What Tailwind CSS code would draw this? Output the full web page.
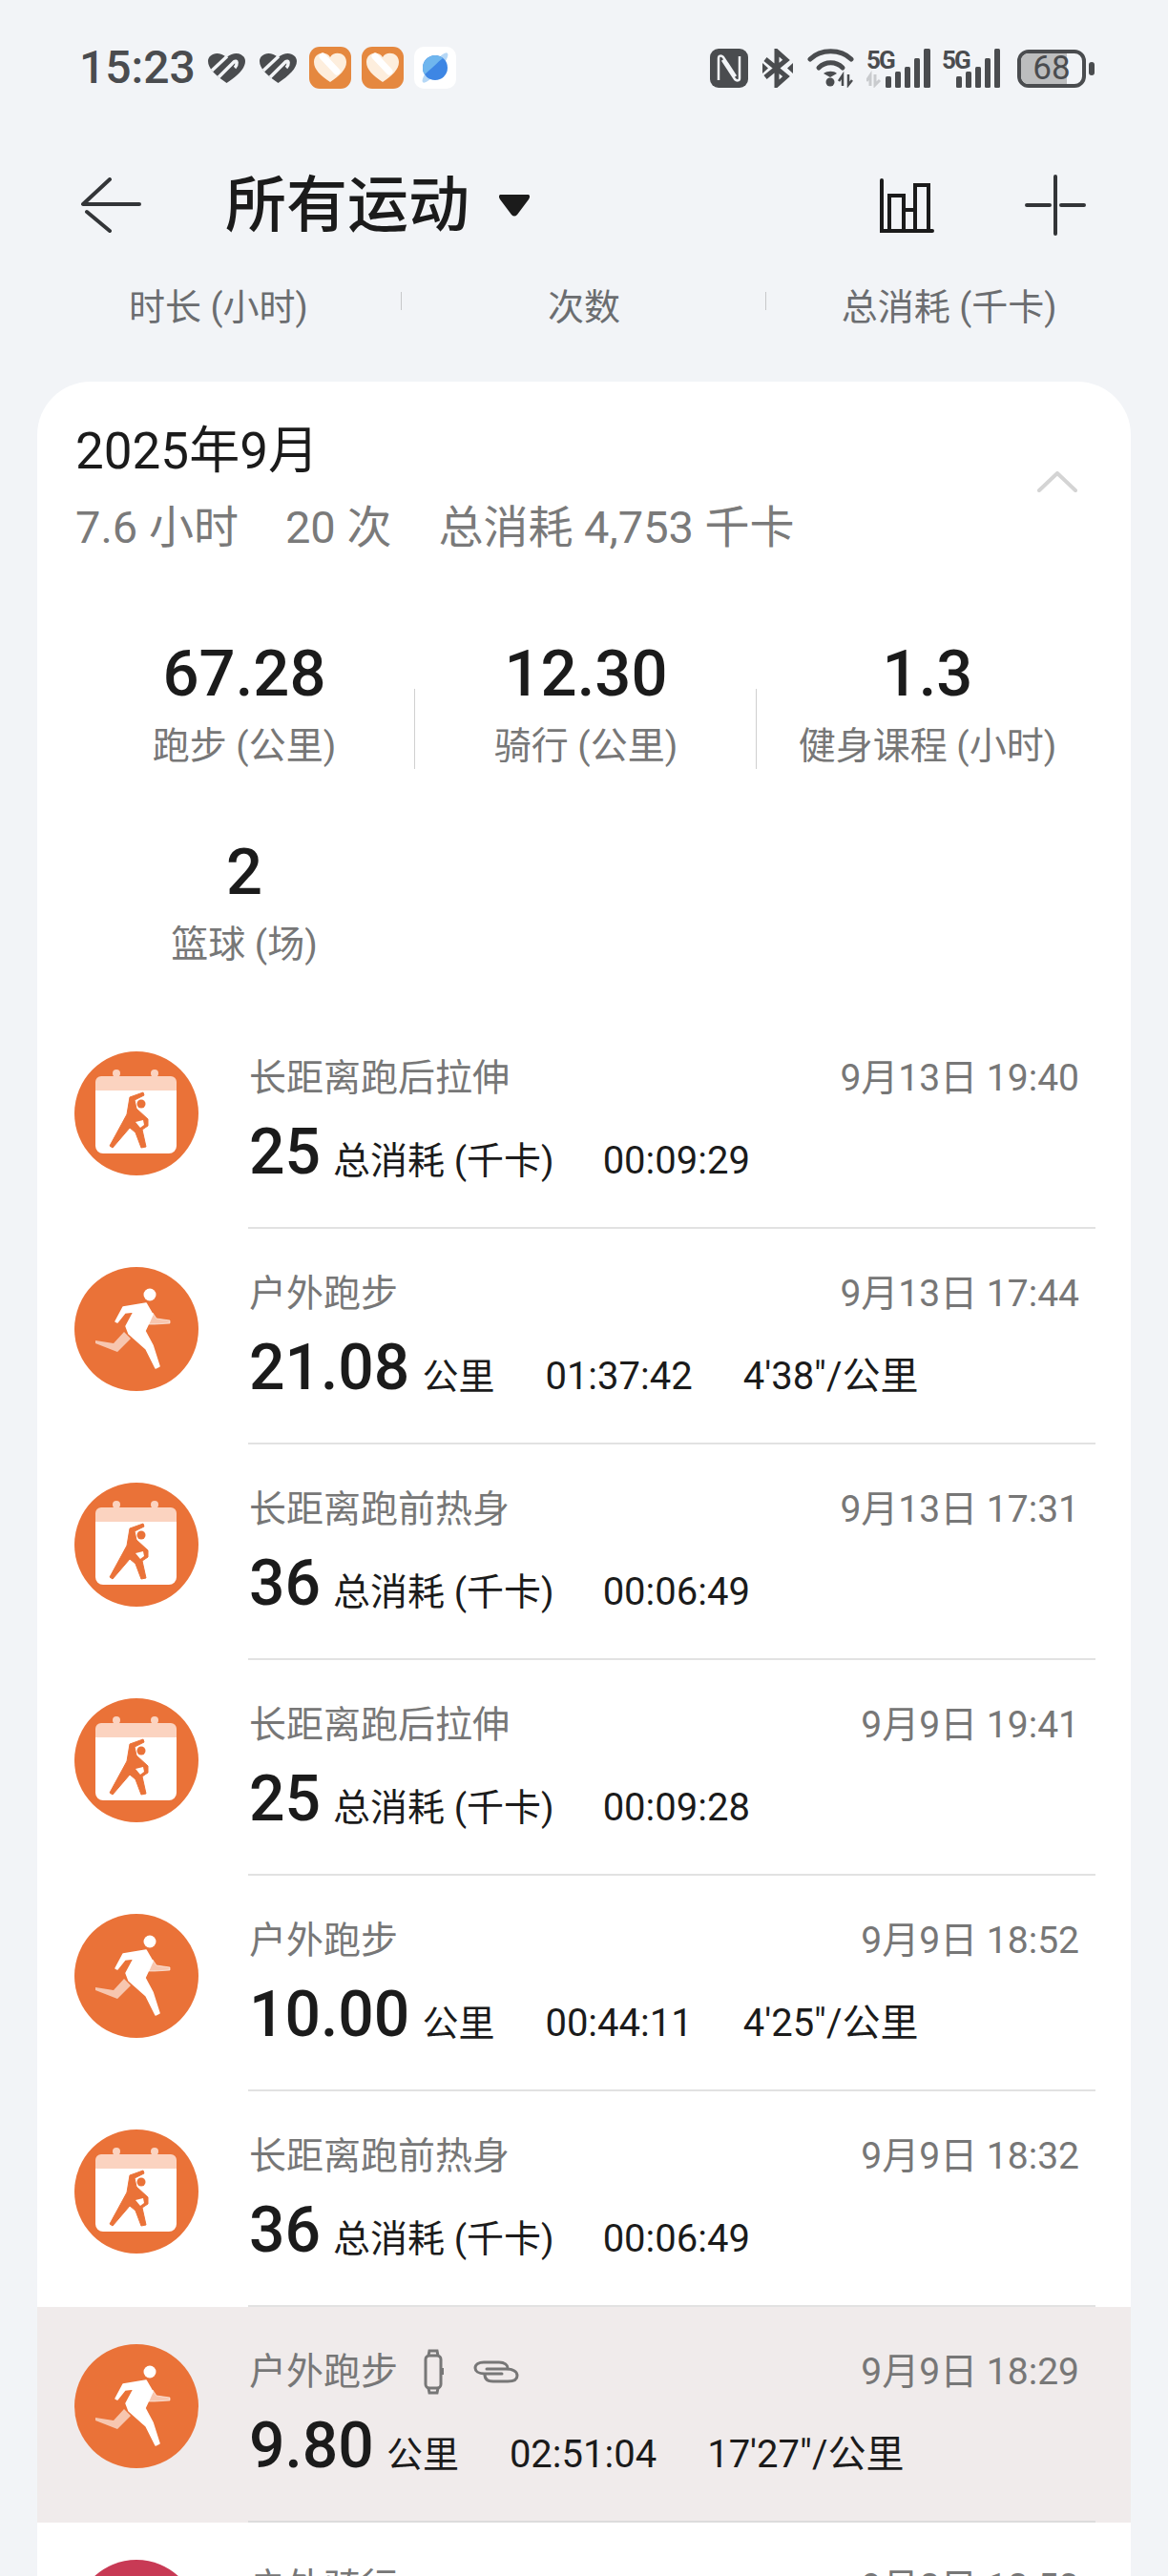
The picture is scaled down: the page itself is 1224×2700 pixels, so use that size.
<!DOCTYPE html>
<html lang="zh">
<head>
  <meta charset="UTF-8" />
  <title>所有运动</title>
  <script src="https://cdn.jsdelivr.net/npm/@tailwindcss/browser@4"></script>
</head>
<body class="bg-[#f2f4f7] h-[2700px] overflow-hidden font-['Roboto','Noto_Sans_CJK_SC',sans-serif]">

  <!-- hidden icon defs -->
  <svg class="hidden">
    <symbol id="run" viewBox="0 0 130 130">
      <circle cx="65" cy="65" r="65" fill="#ea7238"/>
      <path d="M82 48 86 54 100 56 100 59 84 60 78 60Z" fill="#fff" fill-opacity=".6" stroke="#fff" stroke-opacity=".6" stroke-width="1" stroke-linejoin="round"/>
      <path d="M22 77 41 80 52 68 59 75 45 89 22 80Z" fill="#fff" fill-opacity=".6" stroke-linejoin="round"/>
      <circle cx="79" cy="29" r="6.5" fill="#fff"/>
      <path d="M43 57 51 42 75 38 82 50 74 67 82 82 89 104 85 106 75 86 57 70 54 62 62 47 53 48 45 58Z" fill="#fff" stroke="#fff" stroke-width="1.5" stroke-linejoin="round"/>
    </symbol>
    <symbol id="stretch" viewBox="0 0 130 130">
      <circle cx="65" cy="65" r="65" fill="#ea7238"/>
      <circle cx="44" cy="23" r="4" fill="#fbd3c0"/>
      <circle cx="84" cy="23" r="4" fill="#fbd3c0"/>
      <path d="M22 41V32a6 6 0 0 1 6-6H101a6 6 0 0 1 6 6V41Z" fill="#fbd3c0"/>
      <path d="M22 41H107V99a8 8 0 0 1-8 8H30a8 8 0 0 1-8-8Z" fill="#fff"/>
      <circle cx="70" cy="55" r="4.5" fill="#ea7238"/>
      <path d="M58 48 72 43 73 46 63 51 65 60 77 71 77 78 71 82 75 100 70 101 64 85 58 80 40 101 37 99 55 66Z" fill="#ea7238" stroke="#ea7238" stroke-width="1" stroke-linejoin="round"/>
      <path d="M64 74 72 72 73 77 69 80Z" fill="#fff"/>
    </symbol>
    <symbol id="pulse" viewBox="0 0 39 32">
      <path d="M19.5 32C8 24 0 17 0 9 0 2 10-3 19.5 5 29-3 39 2 39 9 39 17 31 24 19.5 32Z" fill="#4a4c4f"/>
      <path d="M4 19 20 4M11 26 27 10C31 7 31 13 28 16" fill="none" stroke="#f2f4f7" stroke-width="3.5"/>
    </symbol>
    <symbol id="health" viewBox="0 0 44 44">
      <rect width="44" height="44" rx="11" fill="#e5883f"/>
      <path d="M22 37C12 30 5 24 5 16 5 6 18 4 22 11 26 4 39 6 39 16 39 24 32 30 22 37Z" fill="#fdeedd"/>
      <path d="M14 10 29 26" stroke="#fff" stroke-width="7" stroke-linecap="round"/>
    </symbol>
  </svg>

  <!-- status bar -->
  <div class="h-[165px] pt-[49px] pl-[83px] pr-[77px] flex justify-between items-start">
    <div class="flex items-center h-[44px] text-[#4a4c4f]">
      <span class="text-[48px] font-medium leading-none w-[135px]">15:23</span>
      <svg class="w-[39px] h-[32px]"><use href="#pulse"/></svg>
      <svg class="w-[39px] h-[32px] ml-[15px] mr-[13px]"><use href="#pulse"/></svg>
      <svg class="w-[44px] h-[44px]"><use href="#health"/></svg>
      <svg class="w-[44px] h-[44px] ml-[11px]"><use href="#health"/></svg>
      <svg class="w-[44px] h-[44px] ml-[11px]" viewBox="0 0 44 44"><rect width="44" height="44" rx="10" fill="#fff"/><ellipse cx="22" cy="22" rx="20" ry="5" transform="rotate(-50 22 22)" fill="#b6d8f6"/><circle cx="22" cy="22" r="13" fill="#3d86e4"/><path d="M9 21A13 13 0 0 1 30 12C26 15 16 25 11 29 9 27 9 24 9 21Z" fill="#6fb6ee"/></svg>
    </div>
    <div class="flex items-center h-[41px] mt-[2px] text-[#4a4c4f]">
      <svg class="w-[40px] h-[41px]" viewBox="0 0 40 41"><rect width="40" height="41" rx="9" fill="#4a4c4f"/><path d="M9 33V10C9 7 12 7 14 9L27 29M31 8V31C31 34 28 34 26 32L13 12" fill="none" stroke="#f2f4f7" stroke-width="2.5"/></svg>
      <svg class="w-[32px] h-[41px] ml-[15px]" viewBox="0 0 32 41"><path d="M3 11 25 29 15 38V3L25 12 3 30" fill="none" stroke="#4a4c4f" stroke-width="5"/><path d="M0 15V26L6 20.500ZM32 15V26L26 20.500Z" fill="#4a4c4f"/></svg>
      <svg class="w-[49px] h-[41px] ml-[15px]" viewBox="0 0 49 41"><g fill="none" stroke="#4a4c4f" stroke-width="5" stroke-linecap="round"><path d="M3 11C14 0 35 0 46 11"/><path d="M12 20C19 13 30 13 37 20"/></g><path d="M17 26C21 23 28 23 31 26L24 30Z" fill="#4a4c4f"/><circle cx="24" cy="35" r="4.500" fill="#4a4c4f"/><path d="M37 39V28L33 34M43 27V38L47 33" fill="none" stroke="#4a4c4f" stroke-width="2.500"/></svg>
      <div class="relative w-[67px] h-[41px] ml-[13px]">
        <span class="absolute left-0 -top-[1px] text-[26px] font-bold leading-none tracking-[-2px]">5G</span>
        <svg class="absolute left-0 top-0 w-[67px] h-[41px]" viewBox="0 0 67 41" fill="#4a4c4f"><path d="M4 39V28L0 34M9 27V38L14 33" fill="none" stroke="#c9cbce" stroke-width="3"/><rect x="20" y="29" width="6" height="12" rx="1.500"/><rect x="30" y="24" width="6" height="17" rx="1.500"/><rect x="40" y="19" width="6" height="22" rx="1.500"/><rect x="50" y="10" width="6" height="31" rx="1.500"/><rect x="60" y="0" width="7" height="41" rx="1.500"/></svg>
      </div>
      <div class="relative w-[61px] h-[41px] ml-[12px]">
        <span class="absolute left-0 -top-[1px] text-[26px] font-bold leading-none tracking-[-2px]">5G</span>
        <svg class="absolute left-0 top-0 w-[61px] h-[41px]" viewBox="0 0 61 41" fill="#4a4c4f"><rect x="15" y="29" width="6" height="12" rx="1.500"/><rect x="25" y="24" width="6" height="17" rx="1.500"/><rect x="35" y="19" width="6" height="22" rx="1.500"/><rect x="45" y="10" width="6" height="31" rx="1.500"/><rect x="55" y="0" width="6" height="41" rx="1.500"/></svg>
      </div>
      <div class="relative w-[72px] h-[40px] ml-[18px] rounded-[12px] border-[4px] border-[#4a4c4f] overflow-hidden">
        <div class="absolute inset-y-0 left-0 w-[75%] bg-[#bcbdbe]"></div>
        <span class="absolute inset-0 flex items-center justify-center text-[35px] leading-none">68</span>
      </div>
      <div class="w-[6px] h-[14px] ml-[3px] rounded-sm bg-[#4a4c4f]"></div>
    </div>
  </div>

  <!-- nav -->
  <div class="h-[100px] flex items-center pl-[85px] pr-[86px]">
    <svg class="w-[63px] h-[58px]" viewBox="0 0 63 58" fill="none" stroke="#333538" stroke-width="4" stroke-linecap="round" stroke-linejoin="round"><path d="M30 2 2 28H61M6 36 30 56"/></svg>
    <span class="ml-[88px] mt-[2px] text-[64px] leading-none font-medium text-[#1b1b1b]">所有运动</span>
    <svg class="ml-[31px] w-[32px] h-[23px]" viewBox="0 0 32 23" fill="#1b1b1b"><path d="M2 0H30C32 0 33 2 31 5L19 21C17 23 15 23 13 21L1 5C-1 2 0 0 2 0Z"/></svg>
    <svg class="ml-auto w-[57px] h-[57px]" viewBox="0 0 57 57" fill="none" stroke="#1b1b1b" stroke-width="4" stroke-linecap="round"><path d="M2 2V55H55"/><path d="M10 55V18H25V55M25 33H37V55M37 55V7H51V55"/></svg>
    <svg class="ml-[95px] w-[64px] h-[64px]" viewBox="0 0 64 64" fill="none" stroke="#333538" stroke-width="4" stroke-linecap="round"><path d="M32 2V62M2 32H26M38 32H62"/></svg>
  </div>

  <!-- column labels -->
  <div class="h-[44px] mt-[35px] grid grid-cols-3 text-[38px] leading-[44px] text-[#6b6d70] text-center px-[38px]">
    <div class="relative pr-[1px]">时长 (小时)<span class="absolute right-0 top-[6px] h-[19px] w-[1px] bg-[#c7c8ca]"></span></div>
    <div class="relative">次数<span class="absolute right-0 top-[6px] h-[19px] w-[1px] bg-[#c7c8ca]"></span></div>
    <div>总消耗 (千卡)</div>
  </div>

  <!-- month card -->
  <div class="mx-[39px] mt-[56px] w-[1146px] h-[2300px] rounded-t-[56px] bg-white overflow-hidden">
    <div class="relative pl-[40px] pt-[43px]">
      <div class="text-[53px] leading-[60px] text-[#1b1b1b]">2025年9月</div>
      <div class="mt-[22px] flex gap-[49px] text-[47px] leading-[56px] text-[#7a7a7a] whitespace-nowrap">
        <span>7.6 小时</span><span>20 次</span><span>总消耗 4,753 千卡</span>
      </div>
      <svg class="absolute left-[1048px] top-[94px] w-[42px] h-[22px]" viewBox="0 0 42 22" fill="none" stroke="#d4d4d4" stroke-width="4" stroke-linecap="round" stroke-linejoin="round"><path d="M2 20 21 2 40 20"/></svg>
    </div>

    <!-- totals -->
    <div class="mt-[85px] grid grid-cols-3 w-[1074px] ml-[38px] text-center">
      <div class="relative h-[208px]">
        <div class="text-[67px] leading-[80px] font-medium text-[#1b1b1b]">67.28</div>
        <div class="text-[39px] leading-[48px] text-[#777] mt-[12px]">跑步 (公里)</div>
        <span class="absolute right-0 top-[56px] h-[84px] w-[1px] bg-[#d0d0d0]"></span>
      </div>
      <div class="relative h-[208px]">
        <div class="text-[67px] leading-[80px] font-medium text-[#1b1b1b]">12.30</div>
        <div class="text-[39px] leading-[48px] text-[#777] mt-[12px]">骑行 (公里)</div>
        <span class="absolute right-0 top-[56px] h-[84px] w-[1px] bg-[#d0d0d0]"></span>
      </div>
      <div class="h-[208px]">
        <div class="text-[67px] leading-[80px] font-medium text-[#1b1b1b]">1.3</div>
        <div class="text-[39px] leading-[48px] text-[#777] mt-[12px] whitespace-nowrap">健身课程 (小时)</div>
      </div>
      <div class="h-[188px]">
        <div class="text-[67px] leading-[80px] font-medium text-[#1b1b1b]">2</div>
        <div class="text-[39px] leading-[48px] text-[#777] mt-[12px]">篮球 (场)</div>
      </div>
    </div>

    <!-- records -->
    <div>
      <div class="h-[226px] flex pl-[39px]">
        <svg class="mt-[40px] w-[130px] h-[130px] shrink-0"><use href="#stretch"/></svg>
        <div class="ml-[52px] w-[888px] border-b-2 border-[#e2e2e2] pl-[1px] pr-[17px]">
          <div class="flex justify-between mt-[43px] text-[39px] leading-[50px] text-[#777]"><span>长距离跑后拉伸</span><span>9月13日 19:40</span></div>
          <div class="flex items-baseline mt-[13px] text-[#1b1b1b] whitespace-pre"><span class="text-[66px] leading-[80px] font-medium mr-[13px]">25</span><span class="text-[39px] mr-[51px]">总消耗 (千卡)</span><span class="text-[40px]">00:09:29</span></div>
        </div>
      </div>
      <div class="h-[226px] flex pl-[39px]">
        <svg class="mt-[40px] w-[130px] h-[130px] shrink-0"><use href="#run"/></svg>
        <div class="ml-[52px] w-[888px] border-b-2 border-[#e2e2e2] pl-[1px] pr-[17px]">
          <div class="flex justify-between mt-[43px] text-[39px] leading-[50px] text-[#777]"><span>户外跑步</span><span>9月13日 17:44</span></div>
          <div class="flex items-baseline mt-[13px] text-[#1b1b1b] whitespace-pre"><span class="text-[66px] leading-[80px] font-medium mr-[13px]">21.08</span><span class="text-[38px] mr-[53px]">公里</span><span class="text-[40px] mr-[53px]">01:37:42</span><span class="text-[40px]">4'38"/公里</span></div>
        </div>
      </div>
      <div class="h-[226px] flex pl-[39px]">
        <svg class="mt-[40px] w-[130px] h-[130px] shrink-0"><use href="#stretch"/></svg>
        <div class="ml-[52px] w-[888px] border-b-2 border-[#e2e2e2] pl-[1px] pr-[17px]">
          <div class="flex justify-between mt-[43px] text-[39px] leading-[50px] text-[#777]"><span>长距离跑前热身</span><span>9月13日 17:31</span></div>
          <div class="flex items-baseline mt-[13px] text-[#1b1b1b] whitespace-pre"><span class="text-[66px] leading-[80px] font-medium mr-[13px]">36</span><span class="text-[39px] mr-[51px]">总消耗 (千卡)</span><span class="text-[40px]">00:06:49</span></div>
        </div>
      </div>
      <div class="h-[226px] flex pl-[39px]">
        <svg class="mt-[40px] w-[130px] h-[130px] shrink-0"><use href="#stretch"/></svg>
        <div class="ml-[52px] w-[888px] border-b-2 border-[#e2e2e2] pl-[1px] pr-[17px]">
          <div class="flex justify-between mt-[43px] text-[39px] leading-[50px] text-[#777]"><span>长距离跑后拉伸</span><span>9月9日 19:41</span></div>
          <div class="flex items-baseline mt-[13px] text-[#1b1b1b] whitespace-pre"><span class="text-[66px] leading-[80px] font-medium mr-[13px]">25</span><span class="text-[39px] mr-[51px]">总消耗 (千卡)</span><span class="text-[40px]">00:09:28</span></div>
        </div>
      </div>
      <div class="h-[226px] flex pl-[39px]">
        <svg class="mt-[40px] w-[130px] h-[130px] shrink-0"><use href="#run"/></svg>
        <div class="ml-[52px] w-[888px] border-b-2 border-[#e2e2e2] pl-[1px] pr-[17px]">
          <div class="flex justify-between mt-[43px] text-[39px] leading-[50px] text-[#777]"><span>户外跑步</span><span>9月9日 18:52</span></div>
          <div class="flex items-baseline mt-[13px] text-[#1b1b1b] whitespace-pre"><span class="text-[66px] leading-[80px] font-medium mr-[13px]">10.00</span><span class="text-[38px] mr-[53px]">公里</span><span class="text-[40px] mr-[53px]">00:44:11</span><span class="text-[40px]">4'25"/公里</span></div>
        </div>
      </div>
      <div class="h-[226px] flex pl-[39px]">
        <svg class="mt-[40px] w-[130px] h-[130px] shrink-0"><use href="#stretch"/></svg>
        <div class="ml-[52px] w-[888px] border-b-2 border-[#e2e2e2] pl-[1px] pr-[17px]">
          <div class="flex justify-between mt-[43px] text-[39px] leading-[50px] text-[#777]"><span>长距离跑前热身</span><span>9月9日 18:32</span></div>
          <div class="flex items-baseline mt-[13px] text-[#1b1b1b] whitespace-pre"><span class="text-[66px] leading-[80px] font-medium mr-[13px]">36</span><span class="text-[39px] mr-[51px]">总消耗 (千卡)</span><span class="text-[40px]">00:06:49</span></div>
        </div>
      </div>
      <!-- pressed row -->
      <div class="h-[226px] flex pl-[39px] bg-[#f0ebeb]">
        <svg class="mt-[39px] w-[130px] h-[130px] shrink-0"><use href="#run"/></svg>
        <div class="ml-[52px] w-[888px] border-b-2 border-[#dcdcdc] pl-[1px] pr-[17px]">
          <div class="flex justify-between items-center mt-[43px] text-[39px] leading-[50px] text-[#777]">
            <span class="flex items-center">户外跑步
              <svg class="ml-[27px] w-[21px] h-[48px]" viewBox="0 0 21 48" fill="none" stroke="#777" stroke-width="3"><rect x="2" y="7" width="16" height="34" rx="4"/><path d="M5 7 6 2H14L15 7M5 41 6 46H14L15 41M20 20V27"/></svg>
              <svg class="ml-[31px] w-[48px] h-[24px]" viewBox="0 0 48 24" fill="none" stroke="#777" stroke-width="3" stroke-linecap="round"><path d="M30 14H12C5 14 2 11 2 8 2 4 6 2 11 2H27C33 2 36 5 36 8"/><path d="M14 9H34C42 9 46 12 46 16 46 20 42 22 36 22H21C15 22 12 20 12 15"/></svg>
            </span>
            <span>9月9日 18:29</span>
          </div>
          <div class="flex items-baseline mt-[13px] text-[#1b1b1b] whitespace-pre"><span class="text-[66px] leading-[80px] font-medium mr-[13px]">9.80</span><span class="text-[38px] mr-[53px]">公里</span><span class="text-[40px] mr-[53px]">02:51:04</span><span class="text-[40px]">17'27"/公里</span></div>
        </div>
      </div>
      <!-- cut off row -->
      <div class="h-[226px] flex pl-[39px]">
        <div class="mt-[39px] w-[130px] h-[130px] shrink-0 rounded-full bg-[#c83a55]"></div>
        <div class="ml-[52px] w-[888px] pl-[1px] pr-[17px]">
          <div class="flex justify-between mt-[43px] text-[39px] leading-[50px] text-[#777]"><span>户外骑行</span><span>9月8日 18:50</span></div>
        </div>
      </div>
    </div>
  </div>
</body>
</html>
